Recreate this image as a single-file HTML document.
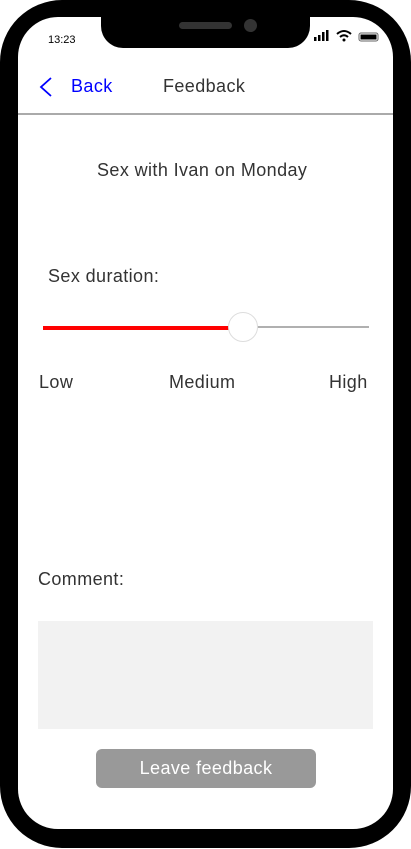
<!DOCTYPE html>
<html><head><meta charset="utf-8"><style>
*{margin:0;padding:0;box-sizing:border-box}
html,body{width:411px;height:849px;background:#fff;overflow:hidden;font-family:"Liberation Sans",sans-serif;color:#333}
.outer{position:absolute;left:0;top:0;width:411px;height:848px;background:#000;border-radius:62px}
.inner{position:absolute;left:18px;top:17px;width:375px;height:812px;background:#fff;border-radius:40px;overflow:hidden}
.notch{position:absolute;left:83px;top:0;width:209px;height:31px;background:#000;border-radius:0 0 22px 22px}
.spk{position:absolute;left:179px;top:22px;width:53px;height:7px;background:#333;border-radius:4px}
.cam{position:absolute;left:244px;top:19px;width:13px;height:13px;background:#333;border-radius:50%}
.t{position:absolute;font-size:18px;white-space:nowrap;letter-spacing:0.4px}
</style></head><body>
<div class="outer"></div>
<div class="inner">
<div class="notch"></div>
</div>
<div class="spk"></div><div class="cam"></div>
<div class="t" style="left:48px;top:34px;font-size:11px;color:#000;letter-spacing:0">13:23</div>
<svg style="position:absolute;left:312px;top:29px" width="70" height="15">
<rect x="2" y="8" width="2.5" height="4" fill="#000"/><rect x="6" y="6" width="2.5" height="6" fill="#000"/><rect x="10" y="3" width="2.5" height="9" fill="#000"/><rect x="14" y="1" width="2.5" height="11" fill="#000"/>
<path d="M25 5 Q32 -1 39 5" stroke="#000" stroke-width="2" fill="none"/><path d="M28 8 Q32 4.5 36 8" stroke="#000" stroke-width="2" fill="none"/><circle cx="32" cy="11" r="1.5" fill="#000"/>
<rect x="47" y="4" width="19" height="8" rx="2" fill="none" stroke="#666" stroke-width="1"/><rect x="48.5" y="5.5" width="16" height="5" fill="#000"/>
</svg>
<svg style="position:absolute;left:39px;top:77px" width="14" height="20"><path d="M12 1 L2 10 L12 19" stroke="#00f" stroke-width="1.8" fill="none"/></svg>
<div class="t" style="left:71px;top:76px;color:#00f">Back</div>
<div class="t" style="left:163px;top:76px">Feedback</div>
<div style="position:absolute;left:18px;top:113px;width:375px;height:2px;background:#aaa"></div>
<div class="t" style="left:97px;top:160px">Sex with Ivan on Monday</div>
<div class="t" style="left:48px;top:266px">Sex duration:</div>
<div style="position:absolute;left:229px;top:326px;width:140px;height:2px;background:#b0b0b0"></div>
<div style="position:absolute;left:43px;top:326px;width:190px;height:4px;background:#f00"></div>
<div style="position:absolute;left:228px;top:312px;width:30px;height:30px;border-radius:50%;background:#fff;border:1px solid #ddd"></div>
<div class="t" style="left:39px;top:372px">Low</div>
<div class="t" style="left:169px;top:372px">Medium</div>
<div class="t" style="left:329px;top:372px">High</div>
<div class="t" style="left:38px;top:569px">Comment:</div>
<div style="position:absolute;left:38px;top:621px;width:335px;height:108px;background:#f2f2f2"></div>
<div style="position:absolute;left:96px;top:749px;width:220px;height:39px;background:#999;border-radius:6px;color:#fff;font-size:18px;text-align:center;line-height:39px;letter-spacing:0.4px">Leave feedback</div>
</body></html>
